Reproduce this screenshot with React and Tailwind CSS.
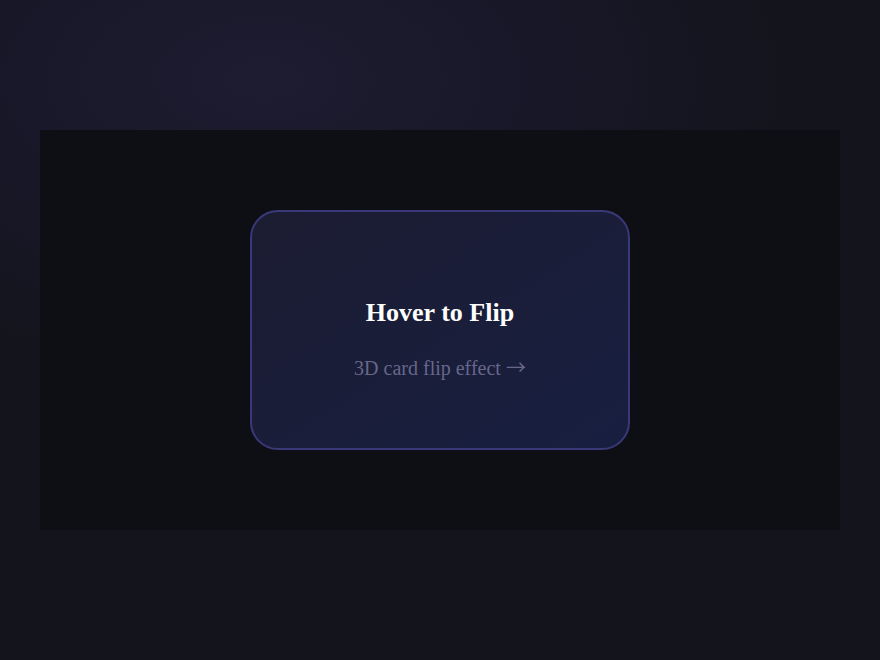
import React from 'react';

const FlipCard = () => {
  return (
    <div className="group w-[380px] h-[240px] [perspective:1000px]">
      <div className="relative w-full h-full">
        <div className="absolute inset-0 flex flex-col items-center justify-center pt-[17px] rounded-[28px] border-2 border-[#3a3878] bg-gradient-to-br from-[#1c1c32] to-[#171f40]">
          <h2 className="text-[26px] font-bold text-white leading-none">Hover to Flip</h2>
          <p className="mt-[31px] text-[20px] text-[#67678a] leading-none">
            3D card flip effect{' '}
            <span style={{ fontFamily: '"Noto Sans CJK SC", sans-serif' }}>→</span>
          </p>
        </div>
      </div>
    </div>
  );
};

export default function App() {
  return (
    <div
      className="min-h-screen flex items-center justify-center px-10 bg-[#14141d] bg-[radial-gradient(ellipse_60%_45%_at_30%_12%,#1e1c30_0%,#19182a_45%,#14141d_100%)]"
      style={{ fontFamily: '"Liberation Serif", "Times New Roman", serif' }}
    >
      <div className="w-[800px] h-[400px] bg-[#0e0f14] flex items-center justify-center">
        <FlipCard />
      </div>
    </div>
  );
}
